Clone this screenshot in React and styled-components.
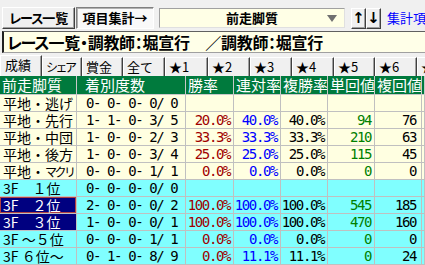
import React from "react";
import styled, { createGlobalStyle, css } from "styled-components";

const GlobalStyle = createGlobalStyle`
  html, body { margin: 0; padding: 0; background: #f0f0f0; }
  body { font-family: "Noto Sans CJK JP", sans-serif; overflow: hidden; }
  #root { width: 425px; height: 265px; overflow: hidden; }
`;

const Page = styled.div`
  width: 425px;
  height: 265px;
  overflow: hidden;
  background: #f0f0f0;
  display: flex;
  flex-direction: column;
`;

const Toolbar = styled.div`
  display: flex;
  align-items: center;
  height: 22px;
  margin-top: 7px;
  padding-left: 2px;
  white-space: nowrap;
`;

const raised = css`
  border: 1px solid;
  border-color: #ffffff #404040 #404040 #ffffff;
  box-shadow: inset -1px -1px 0 #a0a0a0;
  background: #f0f0f0;
`;

const sunken = css`
  border: 1px solid;
  border-color: #808080 #ffffff #ffffff #808080;
  box-shadow: inset 1px 1px 0 #b0b0b0;
  background: #f9f9f9;
`;

const ToolButton = styled.button`
  box-sizing: border-box;
  flex: none;
  width: ${(p) => p.$w}px;
  height: 22px;
  padding: 0;
  margin: 0 ${(p) => p.$mr || 0}px 0 0;
  font: bold 13px "Noto Sans CJK JP", sans-serif;
  line-height: 20px;
  color: #000;
  white-space: nowrap;
  overflow: hidden;
  ${(p) => (p.$pressed ? sunken : raised)}
`;

const Kana = styled.span`
  letter-spacing: ${(p) => p.$ls}px;
  font-size: ${(p) => (p.$fs ? `${p.$fs}px` : "inherit")};
`;

const Combo = styled.div`
  box-sizing: border-box;
  flex: none;
  position: relative;
  width: 186px;
  height: 20px;
  margin-right: 6px;
  background: #ffffe6;
  border: 1px solid;
  border-color: #a0a0a0 #e0e0e0 #e0e0e0 #a0a0a0;
  font: bold 13px "Noto Sans CJK JP", sans-serif;
  line-height: 18px;
  text-align: center;
`;

const ComboArrow = styled.span`
  position: absolute;
  right: 7px;
  top: 6px;
  width: 0;
  height: 0;
  border-left: 5px solid transparent;
  border-right: 5px solid transparent;
  border-top: 7px solid #707070;
`;

const ArrowButton = styled.button`
  box-sizing: border-box;
  flex: none;
  width: 15px;
  height: 21px;
  padding: 0;
  margin: 0;
  ${raised}
  font: bold 15px "DejaVu Sans", sans-serif;
  line-height: 18px;
  color: #000;
`;

const LinkText = styled.span`
  margin-left: 6px;
  color: #0000ff;
  font: 13px "Noto Sans CJK JP", sans-serif;
  line-height: 20px;
`;

const TitleBar = styled.div`
  box-sizing: border-box;
  margin: 2px 0 0 2px;
  height: 23px;
  background: #ffffe8;
  border-top: 1px solid #606060;
  border-left: 2px solid #202020;
  border-bottom: 1px solid #a0a0a0;
  padding-left: 3px;
  font: bold 16px "Noto Sans CJK JP", sans-serif;
  font-feature-settings: "palt";
  letter-spacing: -0.3px;
  line-height: 21px;
  white-space: nowrap;
  overflow: hidden;
`;

const Tabs = styled.div`
  display: flex;
  align-items: flex-end;
  height: 22px;
  margin-top: 2px;
  white-space: nowrap;
`;

const Tab = styled.div`
  box-sizing: border-box;
  flex: none;
  width: ${(p) => p.$w}px;
  height: ${(p) => (p.$active ? 21 : 19)}px;
  padding-left: ${(p) => (p.$active ? 4 : 3)}px;
  font: 13px "Noto Sans CJK JP", sans-serif;
  line-height: 17px;
  color: #000;
  background: #f0f0f0;
  border-top: 1px solid #ffffff;
  border-left: 1px solid #ffffff;
  border-right: 1px solid #404040;
  box-shadow: inset -1px 0 0 #a0a0a0;
  overflow: hidden;
`;

const Grid = styled.div`
  display: flex;
  flex-direction: column;
`;

const cols = "77px 109px 48px 47px 47px 47px 47px 1fr";

const HeadRow = styled.div`
  display: grid;
  grid-template-columns: ${cols};
  height: 19px;
  background: #007a3d;
`;

const HeadCell = styled.div`
  box-sizing: border-box;
  border-right: 1px solid #c8c8c8;
  border-bottom: 1px solid #c8c8c8;
  padding-left: ${(p) => p.$pl || 2}px;
  color: #ffffff;
  font: 15px "Noto Sans CJK JP", sans-serif;
  line-height: 18px;
  white-space: nowrap;
  overflow: hidden;
`;

const Row = styled.div`
  display: grid;
  grid-template-columns: ${cols};
  height: 17px;
  background: ${(p) => (p.$cyan ? "#80ffff" : "#ffffe1")};
`;

const Cell = styled.div`
  box-sizing: border-box;
  border-right: 1px solid #c0c0c0;
  border-bottom: 1px solid #c0c0c0;
  white-space: pre;
  overflow: hidden;
  line-height: 16px;
`;

const NameCell = styled(Cell)`
  padding-left: 3px;
  font: 14px "Noto Sans CJK JP", sans-serif;
  line-height: 16px;
  color: ${(p) => (p.$sel ? "#ffffff" : "#000000")};
  background: ${(p) => (p.$sel ? "#000080" : "transparent")};
  box-shadow: ${(p) => (p.$focus ? "inset 0 0 0 1px #b04040" : "none")};
`;

const numFont = css`
  font: 14px "DejaVu Sans Mono", monospace;
  letter-spacing: -1.4px;
  line-height: 16px;
`;

const RecordCell = styled(Cell)`
  padding-left: 9px;
  ${numFont}
  color: #000;
`;

const NumCell = styled(Cell)`
  text-align: right;
  padding-right: ${(p) => p.$pr || 2}px;
  ${numFont}
  color: ${(p) => p.$color || "#000"};
`;

const tabs = [
  [["成績"], 42, true],
  [["", "シェア"], 40],
  [["賞金"], 41],
  [["全て"], 42],
  [["★1"], 43],
  [["★2"], 42],
  [["★3"], 42],
  [["★4"], 42],
  [["★5"], 41],
  [["★6"], 42],
  [["★7"], 42],
];

const rows = [
  [["平地・逃げ"], "0- 0- 0- 0/ 0", null],
  [["平地・先行"], "1- 1- 0- 3/ 5", ["20.0%", "40.0%", "40.0%", "94", "76"]],
  [["平地・中団"], "1- 0- 0- 2/ 3", ["33.3%", "33.3%", "33.3%", "210", "63"]],
  [["平地・後方"], "1- 0- 0- 3/ 4", ["25.0%", "25.0%", "25.0%", "115", "45"]],
  [["平地・", "マクリ"], "0- 0- 0- 1/ 1", ["0.0%", "0.0%", "0.0%", "0", "0"]],
  [["3F　１位"], "0- 0- 0- 0/ 0", null, true],
  [["3F　２位"], "2- 0- 0- 0/ 2", ["100.0%", "100.0%", "100.0%", "545", "185"], true, true, true],
  [["3F　３位"], "1- 0- 0- 0/ 1", ["100.0%", "100.0%", "100.0%", "470", "160"], true, true],
  [["3F ～５位"], "0- 0- 0- 1/ 1", ["0.0%", "0.0%", "0.0%", "0", "0"], true],
  [["3F ６位～"], "0- 1- 0- 8/ 9", ["0.0%", "11.1%", "11.1%", "0", "24"], true],
];

const colColors = ["#a00000", "#0000ff", "#000000", "#008000", "#000000"];

export default function App() {
  return (
    <Page>
      <GlobalStyle />
      <Toolbar>
        <ToolButton $w={73} $mr={1}>
          <Kana $ls={-1.6}>レース</Kana>一覧
        </ToolButton>
        <ToolButton $w={78} $mr={5} $pressed>項目集計→</ToolButton>
        <Combo>
          前走脚質
          <ComboArrow />
        </Combo>
        <ArrowButton>↑</ArrowButton>
        <ArrowButton>↓</ArrowButton>
        <LinkText>集計項目</LinkText>
      </Toolbar>
      <TitleBar>
        <Kana $ls={-1}>レース</Kana>一覧・調教師：堀宣行　／調教師：堀宣行
      </TitleBar>
      <Tabs>
        {tabs.map(([t, w, a]) => (
          <Tab key={t.join("")} $w={w} $active={a}>
            {t[0]}
            {t[1] && (
              <Kana $ls={-2.5} $fs={12}>
                {t[1]}
              </Kana>
            )}
          </Tab>
        ))}
      </Tabs>
      <Grid>
        <HeadRow>
          <HeadCell>前走脚質</HeadCell>
          <HeadCell $pl={8}>着別度数</HeadCell>
          <HeadCell>勝率</HeadCell>
          <HeadCell>連対率</HeadCell>
          <HeadCell>複勝率</HeadCell>
          <HeadCell>単回値</HeadCell>
          <HeadCell>複回値</HeadCell>
          <HeadCell>単</HeadCell>
        </HeadRow>
        {rows.map(([name, rec, vals, cyan, sel, focus]) => (
          <Row key={name.join("")} $cyan={cyan}>
            <NameCell $sel={sel} $focus={focus}>
              {name[0]}
              {name[1] && (
                <Kana $ls={-2.5} $fs={12}>
                  {name[1]}
                </Kana>
              )}
            </NameCell>
            <RecordCell>{rec}</RecordCell>
            {[0, 1, 2, 3, 4].map((i) => (
              <NumCell key={i} $color={colColors[i]} $pr={i === 4 ? 5 : 3}>
                {vals ? vals[i] : ""}
              </NumCell>
            ))}
            <Cell />
          </Row>
        ))}
      </Grid>
    </Page>
  );
}
